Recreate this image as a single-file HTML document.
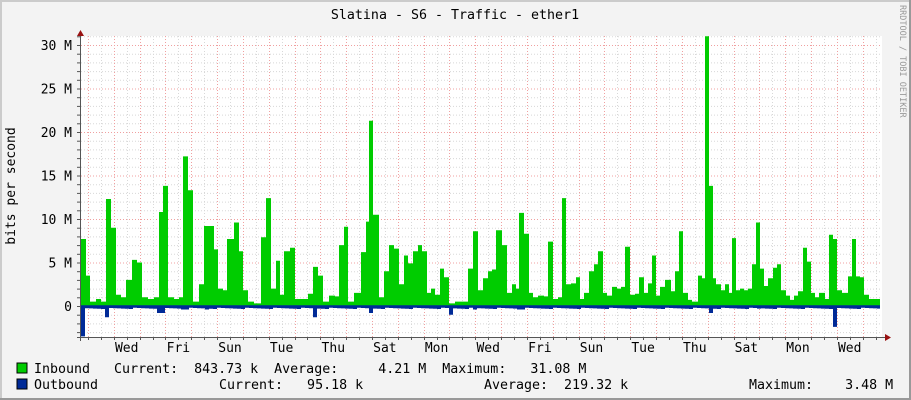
<!DOCTYPE html>
<html><head><meta charset="utf-8"><style>
html,body{margin:0;padding:0;background:#f3f3f3}
svg{display:block}
text{font-family:"DejaVu Sans Mono","Liberation Mono",monospace;font-size:13px;fill:#000}
.lg{font-size:13.3px}
</style></head><body>
<svg id="g" width="911" height="400" xmlns="http://www.w3.org/2000/svg">
<rect x="0" y="0" width="911" height="400" fill="#f3f3f3"/>
<rect x="0" y="0" width="911" height="2" fill="#cbcbcb"/>
<rect x="0" y="0" width="2" height="400" fill="#cbcbcb"/>
<rect x="0" y="398" width="911" height="2" fill="#999"/>
<rect x="909" y="0" width="2" height="400" fill="#999"/>
<rect x="81" y="36" width="801" height="301" fill="#fff"/>
<g id="grid"></g>
<g id="data"></g>
<g id="axes"></g>
<text x="455" y="19" text-anchor="middle" class="lg">Slatina - S6 - Traffic - ether1</text>
<text transform="translate(15,186) rotate(-90)" text-anchor="middle">bits per second</text>
<text transform="translate(900,5) rotate(90)" style="font-size:8.5px;fill:#999">RRDTOOL / TOBI OETIKER</text>
<g id="labels"></g>
<rect x="17" y="363" width="10" height="10" fill="#00cc00" stroke="#000" stroke-width="1"/>
<rect x="17" y="379" width="10" height="10" fill="#002a97" stroke="#000" stroke-width="1"/>
<text class="lg" x="34" y="373" style="white-space:pre" xml:space="preserve">Inbound   Current:  843.73 k  Average:     4.21 M  Maximum:   31.08 M</text>
<text class="lg" x="34" y="389" style="white-space:pre" xml:space="preserve">Outbound</text>
<text class="lg" x="219" y="389" style="white-space:pre" xml:space="preserve">Current:   95.18 k</text>
<text class="lg" x="484" y="389" style="white-space:pre" xml:space="preserve">Average:  219.32 k</text>
<text class="lg" x="749" y="389" style="white-space:pre" xml:space="preserve">Maximum:    3.48 M</text>
</svg>
<script>
var NS="http://www.w3.org/2000/svg";
function el(p,t,a){var e=document.createElementNS(NS,t);for(var k in a)e.setAttribute(k,a[k]);p.appendChild(e);return e;}
var Z=306,S=8.7,X0=81,X1=882,D=25.82;
var grid=document.getElementById('grid');
for(var m=-3;m<=31;m++){var y=Z-m*S;if(y<36||y>337)continue;
 el(grid,'line',{x1:X0,x2:X1,y1:y+.5,y2:y+.5,stroke:(m%5==0?'#f0a0a0':'#d8d8d8'),'stroke-dasharray':'1,2'});}
for(var i=-1;i<62;i++){var x=88+i*D/2;if(x<X0||x>X1)continue;
 el(grid,'line',{x1:Math.round(x)+.5,x2:Math.round(x)+.5,y1:36,y2:337,stroke:(i%2==0?'#f0a0a0':'#d8d8d8'),'stroke-dasharray':'1,2'});}
var inb=[[81,7.7],[86,3.5],[90,0.5],[96,0.8],[101,0.5],[106,12.3],[111,9],[116,1.3],[121,1],[126,3],[132,5.3],[137,5],[142,1],[148,0.8],[154,1],[159,10.8],[163,13.8],[168,1],[174,0.8],[179,1],[183,17.2],[188,13.3],[193,0.5],[199,2.5],[204,9.2],[209,9.2],[214,6.5],[218,2],[223,1.8],[227,7.7],[234,9.6],[239,6.3],[243,1.8],[248,0.5],[254,0.3],[261,7.9],[266,12.4],[271,2],[276,5.2],[280,1.3],[284,6.3],[290,6.7],[295,0.8],[301,0.8],[308,1.4],[313,4.5],[318,3.5],[323,0.5],[329,1.2],[335,1.1],[339,7],[344,9.1],[348,0.5],[354,1.5],[361,6.2],[366,9.7],[369,21.3],[373,10.5],[379,1],[384,4],[389,7],[394,6.6],[399,2.5],[404,5.8],[408,4.9],[413,6.3],[418,7],[422,6.3],[427,1.5],[431,2],[435,1.3],[440,4.3],[444,3.3],[449,0.3],[455,0.5],[464,0.5],[468,4.3],[473,8.6],[478,1.8],[483,3.2],[488,4],[492,4.2],[496,8.7],[502,7],[507,1.5],[512,2.5],[516,2],[519,10.7],[524,8.3],[529,1.5],[533,1],[538,1.2],[544,1.1],[548,7.4],[553,0.8],[558,1],[562,12.4],[566,2.5],[571,2.6],[576,3.3],[580,0.8],[584,1.5],[589,4],[594,4.8],[598,6.3],[603,1.5],[607,1.2],[612,2.2],[617,2],[621,2.2],[625,6.8],[630,1.3],[635,1.4],[639,3.3],[644,1.5],[648,2.6],[652,5.8],[656,1.2],[660,2.2],[665,3],[671,1.7],[675,4],[679,8.6],[683,1.5],[688,0.7],[692,0.5],[698,3.5],[702,3.2],[705,31],[709,13.8],[713,3.2],[716,2.5],[721,1.8],[725,2.5],[729,1.5],[732,7.8],[736,1.8],[740,2],[744,1.8],[748,2],[752,4.8],[756,9.6],[760,4.3],[764,2.3],[768,3.2],[773,4.4],[777,4.8],[781,1.8],[786,1.2],[790,0.7],[794,1.2],[798,1.7],[803,6.7],[807,5.1],[811,1.5],[815,1],[819,1.5],[825,0.8],[829,8.2],[833,7.7],[837,1.8],[842,1.5],[848,3.4],[852,7.7],[856,3.4],[860,3.3],[864,1.3],[869,0.8],[874,0.8],[880,0.8]];
function stepPath(arr,end){var d='M'+arr[0][0]+','+Z;for(var i=0;i<arr.length;i++){var x0=arr[i][0],x1=(i+1<arr.length?arr[i+1][0]:end),y=Z-arr[i][1]*S;d+=' L'+x0+','+y.toFixed(1)+' L'+x1+','+y.toFixed(1);}return d+' L'+end+','+Z+' Z';}
var dg=document.getElementById('data');
el(dg,'path',{d:stepPath(inb,880),fill:'#00cc00'});
var outSp={81:3.5,106:1.3,159:0.8,313:1.3,369:0.8,449:1,709:0.8,833:2.4,183:0.4,204:0.4,473:0.4,519:0.4,625:0.3,756:0.3};
var out=[];for(var x=81;x<880;x+=4){var v=0.2+((x*37)%7)/40;for(var k in outSp){if(Math.abs(x-k)<3)v=outSp[k];}out.push([x,-v]);}
el(dg,'path',{d:stepPath(out,880),fill:'#002a97'});
el(dg,'line',{x1:81,x2:880,y1:Z,y2:Z,stroke:'#002a97','stroke-width':1.5});
var ax=document.getElementById('axes');
el(ax,'line',{x1:80.5,x2:80.5,y1:34,y2:341,stroke:'#555'});
el(ax,'line',{x1:77,x2:886,y1:337.5,y2:337.5,stroke:'#555'});
el(ax,'path',{d:'M77,36 L84,36 L80.5,30 Z',fill:'#911'});
el(ax,'path',{d:'M885,334 L885,341 L891,337.5 Z',fill:'#911'});
for(var m=-3;m<=31;m++){var y=Z-m*S;if(y<36||y>337)continue;el(ax,'line',{x1:77,x2:80,y1:y+.5,y2:y+.5,stroke:'#555'});}
for(var i=0;i<62;i++){var x=88+i*D/2;if(x>X1)break;el(ax,'line',{x1:Math.round(x)+.5,x2:Math.round(x)+.5,y1:337,y2:340,stroke:'#555'});}
var lb=document.getElementById('labels');
var yl=[[30,'30 M'],[25,'25 M'],[20,'20 M'],[15,'15 M'],[10,'10 M'],[5,'5 M'],[0,'0']];
yl.forEach(function(a){var t=el(lb,'text',{x:72,y:Z-a[0]*S+5,'text-anchor':'end','xml:space':'preserve'});t.textContent=a[1];});
var days=['Wed','Fri','Sun','Tue','Thu','Sat','Mon','Wed','Fri','Sun','Tue','Thu','Sat','Mon','Wed'];
days.forEach(function(d,i){var t=el(lb,'text',{x:(88+D*(1.5+2*i)).toFixed(1),y:352,'text-anchor':'middle'});t.textContent=d;});
</script>
</body></html>
